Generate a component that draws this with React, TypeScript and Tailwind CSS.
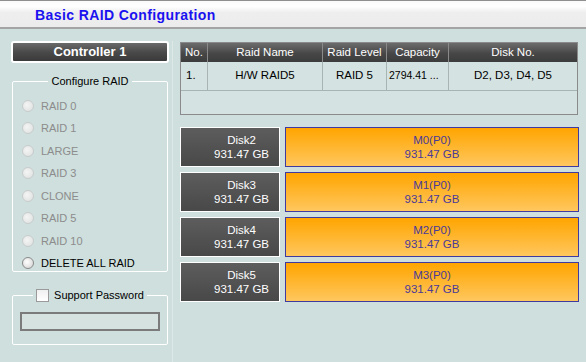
import React from "react";

const raidOptions = ["RAID 0", "RAID 1", "LARGE", "RAID 3", "CLONE", "RAID 5", "RAID 10"];

const disks = [
  { name: "Disk2", size: "931.47 GB", member: "M0(P0)" },
  { name: "Disk3", size: "931.47 GB", member: "M1(P0)" },
  { name: "Disk4", size: "931.47 GB", member: "M2(P0)" },
  { name: "Disk5", size: "931.47 GB", member: "M3(P0)" },
];

function Radio({ label, enabled }: { label: string; enabled?: boolean }) {
  return (
    <div className="flex items-center h-[22.5px]">
      <span
        className={`w-[12px] h-[12px] rounded-full border ml-[9px] mr-[7px] ${
          enabled
            ? "border-[#8a8a8a] bg-[radial-gradient(circle_at_40%_40%,#ffffff,#d0d0d0)]"
            : "border-[#c8cccc] bg-[radial-gradient(circle_at_40%_40%,#f4f4f4,#dcdede)]"
        }`}
      />
      <span className={enabled ? "text-black" : "text-[#8c8c8c]"}>{label}</span>
    </div>
  );
}

export default function App() {
  return (
    <div className="w-[586px] h-[362px] bg-[#cedfdd] font-['Liberation_Sans',Arial,sans-serif] text-[11px] overflow-hidden">
      {/* Header */}
      <div className="h-[29px] border-t border-[#8f8f8f] border-b-2 border-b-[#a4a4a4] bg-[linear-gradient(#fafafa,#ffffff_20%,#eeeeee_45%,#ececec)] flex items-center pl-[35px] pt-[3px]">
        <span className="text-[14px] font-bold text-[#1a12f0] tracking-[0.4px]">Basic RAID Configuration</span>
      </div>

      <div className="flex pt-[12px]">
        {/* Left column */}
        <div className="w-[173px] pl-[11px] border-r border-[#dde9e7] h-[322px]">
          <div className="w-[158px] h-[22px] rounded-[3px] border-2 border-white bg-[linear-gradient(#6a6a6a,#4a4a4a_50%,#3a3a3a)] flex items-center justify-center text-white font-bold text-[13px]">
            Controller 1
          </div>

          <fieldset className="w-[156px] ml-[1px] mt-[10px] border border-white rounded-[2px] h-[199px] pt-[5px]">
            <legend className="mx-auto px-[3px] text-[11px] text-black">Configure RAID</legend>
            <div>
              {raidOptions.map((o) => (
                <Radio key={o} label={o} />
              ))}
              <Radio label="DELETE ALL RAID" enabled />
            </div>
          </fieldset>

          <fieldset className="w-[156px] ml-[1px] mt-[15px] border border-white rounded-[2px] h-[58px]">
            <legend className="mx-auto px-[3px] flex items-center">
              <span className="w-[13px] h-[13px] border border-[#9a9a9a] bg-[linear-gradient(#f0f0f0,#ffffff)] mr-[5px]" />
              <span className="text-[11px] text-black">Support Password</span>
            </legend>
            <div className="mx-[7px] mt-[8px] h-[19px] border-2 border-[#7b7b7b] bg-[#d6e2e0]" />
          </fieldset>
        </div>

        {/* Right column */}
        <div className="pl-[7px] pt-[1px]">
          <div className="w-[398px] h-[73px] border border-[#8a8a8a] bg-[#d4e3e1]">
            <div className="flex h-[19px] bg-[linear-gradient(#6c6c6c,#474747_55%,#3c3c3c)] text-white text-[11.5px]">
              <div className="w-[27px] border-r border-[#8a8a8a] flex items-center justify-center">No.</div>
              <div className="w-[115px] border-r border-[#8a8a8a] flex items-center justify-center">Raid Name</div>
              <div className="w-[64px] border-r border-[#8a8a8a] flex items-center justify-center">Raid Level</div>
              <div className="w-[62px] border-r border-[#8a8a8a] flex items-center justify-center">Capacity</div>
              <div className="flex-1 flex items-center justify-center">Disk No.</div>
            </div>
            <div className="flex h-[29px] border-b border-[#a8b4b3] text-black text-[11.5px]">
              <div className="w-[27px] border-r border-[#a8b4b3] flex items-center pl-[5px]">1.</div>
              <div className="w-[115px] border-r border-[#a8b4b3] flex items-center justify-center">H/W RAID5</div>
              <div className="w-[64px] border-r border-[#a8b4b3] flex items-center justify-center">RAID 5</div>
              <div className="w-[62px] border-r border-[#a8b4b3] flex items-center pl-[2px] text-[10.5px]">2794.41 ...</div>
              <div className="flex-1 flex items-center justify-center">D2, D3, D4, D5</div>
            </div>
          </div>

          <div className="mt-[12px] flex flex-col gap-[5px]">
            {disks.map((d) => (
              <div key={d.name} className="flex gap-[5px] h-[40px]">
                <div className="w-[100px] border border-white bg-[linear-gradient(#5d5d5d,#484848)] flex items-center justify-end pr-[10px] text-white leading-[14px]">
                  <div className="text-center text-[11.5px]">
                    <div>{d.name}</div>
                    <div>{d.size}</div>
                  </div>
                </div>
                <div className="w-[294px] border border-[#3f3aa0] bg-[linear-gradient(#ffa500,#ffc75e)] flex flex-col items-center justify-center text-[#4a3a98] leading-[14px] text-[11.5px]">
                  <div>{d.member}</div>
                  <div>{d.size}</div>
                </div>
              </div>
            ))}
          </div>
        </div>
      </div>
    </div>
  );
}
